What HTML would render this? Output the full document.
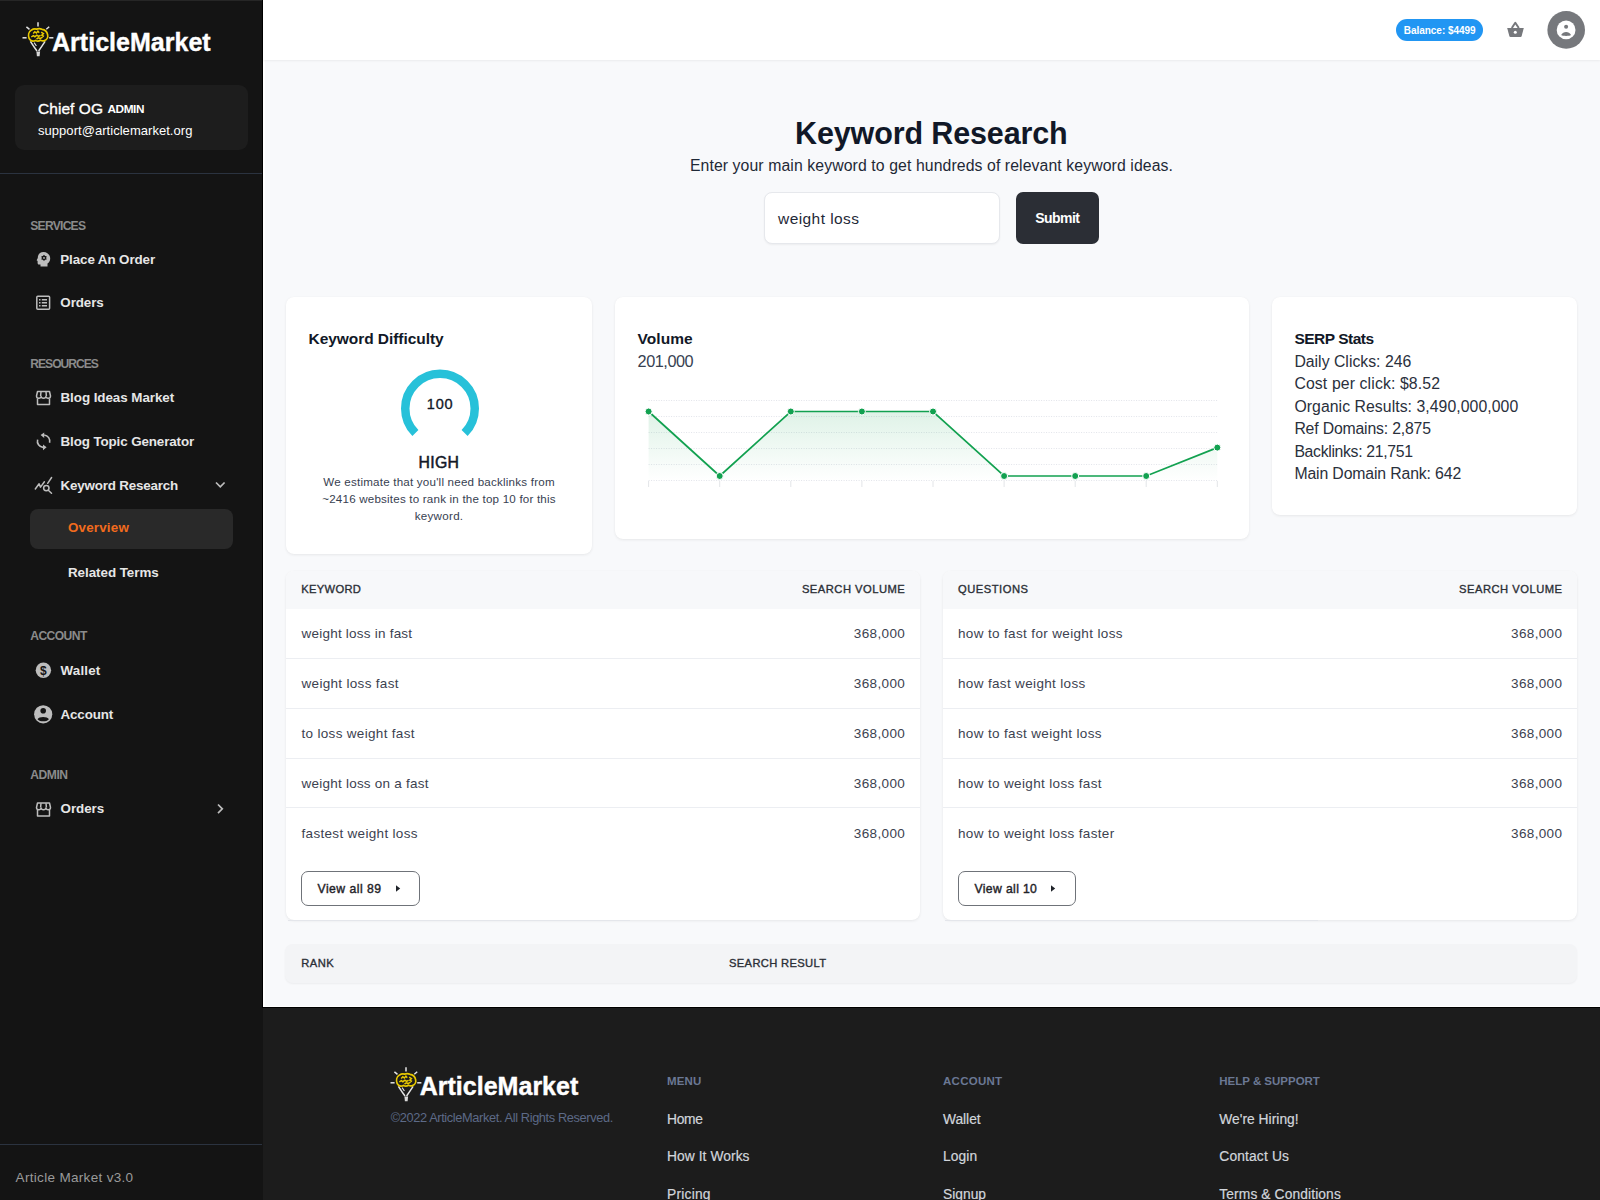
<!DOCTYPE html>
<html><head><meta charset="utf-8">
<style>
html,body{margin:0;padding:0;}
body{width:1600px;height:1200px;overflow:hidden;position:relative;background:#f8f9fb;font-family:"Liberation Sans",sans-serif;}
.t{position:absolute;white-space:nowrap;}
.a{position:absolute;}
#sb{position:absolute;left:0;top:0;width:263px;height:1200px;background:#141414;}
#sbtop{position:absolute;left:0;top:0;width:262px;height:1px;background:#262626;}
#sbline{position:absolute;left:0;top:173px;width:262px;height:1px;background:#2b3340;}
#sbline2{position:absolute;left:0;top:1144px;width:262px;height:1px;background:#2b3340;}
#ucard{position:absolute;left:15px;top:85px;width:233px;height:65px;background:#1d1d1d;border-radius:9px;}
#ov{position:absolute;left:30px;top:509px;width:203px;height:40px;background:#292929;border-radius:8px;}
#vborder{position:absolute;left:262px;top:0;width:1px;height:1008px;background:#000;}
#hborder{position:absolute;left:262px;top:1007px;width:1338px;height:1px;background:#000;}
#wbot{position:absolute;left:263px;top:1006px;width:1337px;height:1px;background:#fff;}
#footer{position:absolute;left:263px;top:1008px;width:1337px;height:192px;background:#1c1c1c;}
#sbfoot{position:absolute;left:0;top:1007px;width:262px;height:193px;background:#141414;}
#wstrip{position:absolute;left:263px;top:0;width:2px;height:1006px;background:#fff;}
#header{position:absolute;left:263px;top:0;width:1337px;height:60px;background:#fff;box-shadow:0 1px 2px rgba(0,0,0,0.06);}
#pill{position:absolute;left:1396px;top:19px;width:87px;height:22px;background:#2196f3;border-radius:11px;}
.card{position:absolute;background:#fff;border-radius:8px;box-shadow:0 1px 3px rgba(0,0,0,0.07),0 0 1px rgba(0,0,0,0.04);}
#inp{position:absolute;left:764px;top:192px;width:234px;height:50px;background:#fff;border:1px solid #e6e8ec;border-radius:8px;box-shadow:0 1px 2px rgba(0,0,0,0.05);}
#sub{position:absolute;left:1016px;top:192px;width:83px;height:52px;background:#2b2e35;border-radius:7px;}
.th{position:absolute;background:#f7f8fa;}
.sep{position:absolute;height:1px;background:#eceef2;}
.btn{position:absolute;border:1px solid #6f7379;border-radius:7px;background:#fff;}
#rank{position:absolute;left:285px;top:944px;width:1292px;height:39px;background:#f3f4f6;border-radius:8px;box-shadow:0 1px 2px rgba(0,0,0,0.05);}
</style></head><body>
<div id="sb"></div>
<div id="sbtop"></div>
<div id="ucard"></div>
<div id="sbline"></div>
<div id="ov"></div>
<div id="sbline2"></div>
<div id="footer"></div>
<div id="vborder"></div>
<div id="hborder"></div>
<div id="wbot"></div>
<div id="wstrip"></div>
<div id="header"></div>
<div id="pill"></div>

<!-- logo sidebar -->
<svg class="a" style="left:0;top:0" width="60" height="60" viewBox="0 0 60 60">
 <g stroke="#e4e4e4" stroke-width="1.5" stroke-linecap="butt" fill="none">
  <line x1="22.5" y1="37.8" x2="26.6" y2="37.8"/>
  <line x1="26.4" y1="26.8" x2="29.5" y2="29.3"/>
  <line x1="38" y1="22.2" x2="38" y2="26.4"/>
  <line x1="49.2" y1="26.8" x2="46.3" y2="29.3"/>
  <line x1="49.2" y1="37.8" x2="53.4" y2="37.8"/>
  <path d="M30.4 41.3 Q33.6 46.3 37 51"/>
  <path d="M45.1 41.3 Q41.8 46.3 38.6 51"/>
  <path d="M34.1 42.6 L36.4 46" stroke-width="1.1"/>
 </g>
 <path d="M36.4 51.5 L40.1 51.5 L39.6 56.3 L36.9 56.3 Z" fill="#d8d8d8"/>
 <path d="M29.2 38.6 C27.9 35.2 28.6 31.6 31.5 30.1 C33 28.9 35 28.7 36.5 29.1 C38 28.5 40.5 28.5 42 29.3 C44.5 29.6 47 31.6 47.6 34.6 C48.2 37.1 47 39.8 44.5 40.6 C43 41.2 41.5 40.8 40.5 40.3 C39 41.2 36.8 41.2 35.5 40.4 C34 41.2 31.5 41 30.3 40 Z" stroke="#e8c900" stroke-width="1.7" fill="#141414"/>
 <path d="M31.3 37 l2 -1.4 1.6 1.1 2 -1.6 1.6 1.3 2 -1.1 M33.2 33.4 l1.6 -1.7 1.6 1.3 1.5 -1.9 1.3 1.6 M41.2 32.2 l2.2 1.5 -1.6 1.5 2.2 1.3 M36.5 39.2 l2 -1.5 1.5 1 2.6 -1.5" stroke="#e8c900" stroke-width="1.5" fill="none"/>
</svg>
<!-- sidebar icons -->
<svg class="a" style="left:0;top:240px" width="60" height="600" viewBox="0 240 60 600">
 <g fill="#bdbdbd">
  <!-- head gear -->
  <path d="M43.5 252 C47.5 252 50.2 255 50.2 258.5 C50.2 261 49 262.5 47.5 263.5 L47.5 266.6 L40.5 266.6 L40.5 264.5 L39 264.5 C38 264.5 37.6 263.8 37.6 263 L37.6 261 L36.6 260.2 L37.8 258 C37.8 254.5 40 252 43.5 252 Z"/>
  <path d="M44.00 254.80 L45.10 255.99 L46.68 256.35 L46.20 257.90 L46.68 259.45 L45.10 259.81 L44.00 261.00 L42.90 259.81 L41.32 259.45 L41.80 257.90 L41.32 256.35 L42.90 255.99 Z" fill="#141414"/>
  <circle cx="44" cy="257.9" r="0.9" fill="#bdbdbd"/>
 </g>
 <g stroke="#bdbdbd" fill="none" stroke-width="1.5">
  <rect x="36.8" y="296.2" width="12.8" height="13" rx="1"/>
 </g>
 <g fill="#bdbdbd">
  <rect x="39" y="299" width="1.5" height="1.5"/><rect x="41.8" y="299" width="5.2" height="1.5"/>
  <rect x="39" y="302" width="1.5" height="1.5"/><rect x="41.8" y="302" width="5.2" height="1.5"/>
  <rect x="39" y="305" width="1.5" height="1.5"/><rect x="41.8" y="305" width="5.2" height="1.5"/>
 </g>
 <!-- store icon -->
 <g stroke="#bdbdbd" fill="none" stroke-width="1.5" stroke-linejoin="round">
  <path d="M36.5 396 L37.5 391.5 L49.5 391.5 L50.5 396 C50.5 397.5 49.3 398.3 48.2 398.3 C47 398.3 46 397.5 45.9 396.5 C45.8 397.5 44.8 398.3 43.5 398.3 C42.2 398.3 41.2 397.5 41.1 396.5 C41 397.5 40 398.3 38.8 398.3 C37.6 398.3 36.5 397.5 36.5 396 Z"/>
  <path d="M37.5 398.5 L37.5 404.5 L49.5 404.5 L49.5 398.5"/>
  <line x1="41" y1="391.8" x2="40.6" y2="396"/><line x1="46" y1="391.8" x2="46.4" y2="396"/>
 </g>
 <!-- refresh icon -->
 <g stroke="#bdbdbd" fill="none" stroke-width="1.6">
  <path d="M44.14 435.02 A6.2 6.2 0 0 1 49.59 442.80"/>
  <path d="M43.06 447.38 A6.2 6.2 0 0 1 37.61 439.60"/>
 </g>
 <path d="M40.6 435.1 L44.2 432.5 L44.2 438 Z M46.6 447.3 L43 450.2 L43 444.4 Z" fill="#bdbdbd"/>
 <!-- keyword research icon -->
 <g stroke="#bdbdbd" fill="none" stroke-width="1.5" stroke-linecap="round" stroke-linejoin="round">
  <path d="M35.3 489 L39.1 483.8 L40.5 487.1 L44.4 481.8"/>
  <path d="M47.7 483.3 L51.6 477.5"/>
  <circle cx="46.3" cy="488.1" r="2.7"/>
  <line x1="48.3" y1="490.2" x2="51.5" y2="493.2"/>
 </g>
 <path d="M216 482.5 L220.3 486.8 L224.6 482.5" stroke="#bdbdbd" stroke-width="1.6" fill="none" transform="translate(0,0)"/>
 <!-- wallet dollar -->
 <circle cx="43.4" cy="670.2" r="7.7" fill="#bdbdbd"/>
 <text x="43.4" y="674.6" text-anchor="middle" font-family="Liberation Sans" font-weight="bold" font-size="12" fill="#141414">$</text>
 <!-- account -->
 <circle cx="43.2" cy="714.3" r="9.1" fill="#bdbdbd"/>
 <circle cx="43.2" cy="710.8" r="2.8" fill="#141414"/>
 <path d="M37.5 719.3 C39 716.2 47.4 716.2 48.9 719.3 C47.5 721 45.5 721.3 43.2 721.3 C41 721.3 39 721 37.5 719.3 Z" fill="#141414"/>
 <!-- admin orders store -->
 <g stroke="#bdbdbd" fill="none" stroke-width="1.5" stroke-linejoin="round">
  <path d="M36.5 807.5 L37.5 803 L49.5 803 L50.5 807.5 C50.5 809 49.3 809.8 48.2 809.8 C47 809.8 46 809 45.9 808 C45.8 809 44.8 809.8 43.5 809.8 C42.2 809.8 41.2 809 41.1 808 C41 809 40 809.8 38.8 809.8 C37.6 809.8 36.5 809 36.5 807.5 Z"/>
  <path d="M37.5 810 L37.5 816 L49.5 816 L49.5 810"/>
  <line x1="41" y1="803.3" x2="40.6" y2="807.5"/><line x1="46" y1="803.3" x2="46.4" y2="807.5"/>
 </g>
</svg>
<svg class="a" style="left:200px;top:470px" width="40" height="360" viewBox="200 470 40 360">
 <path d="M216 482.5 L220.3 486.8 L224.6 482.5" stroke="#bdbdbd" stroke-width="1.7" fill="none"/>
 <path d="M218 804.5 L222.3 808.8 L218 813.1" stroke="#bdbdbd" stroke-width="1.7" fill="none"/>
</svg>

<!-- header icons -->
<svg class="a" style="left:1490px;top:0" width="110" height="60" viewBox="1490 0 110 60">
 <path d="M1507.2 27.9 L1523.8 27.9 L1521.6 36.2 Q1521.3 37 1520.5 37 L1510.5 37 Q1509.7 37 1509.4 36.2 Z" fill="#76787c"/>
 <path d="M1511.8 28 L1515.3 22.8 L1518.8 28" stroke="#76787c" stroke-width="2" fill="none" stroke-linejoin="round"/>
 <circle cx="1515.3" cy="32.3" r="1.5" fill="#fff"/>
 <circle cx="1566.2" cy="29.9" r="18.8" fill="#76787c"/>
 <circle cx="1566.1" cy="29.9" r="9.4" fill="#fff"/>
 <circle cx="1566.1" cy="26.7" r="2" fill="#76787c"/>
 <path d="M1561.2 35 C1563 31 1569.2 31 1571 35 C1569.5 36.2 1562.7 36.2 1561.2 35 Z" fill="#76787c"/>
</svg>

<div id="inp"></div>
<div id="sub"></div>

<!-- cards -->
<div class="card" style="left:286px;top:297px;width:306px;height:257px;"></div>
<div class="card" style="left:615px;top:297px;width:634px;height:242px;"></div>
<div class="card" style="left:1272px;top:297px;width:305px;height:218px;"></div>

<svg class="a" style="left:380px;top:350px" width="120" height="100" viewBox="380 350 120 100">
 <path d="M415.4 433.1 A34.75 34.75 0 1 1 464.6 433.1" stroke="#27c1d9" stroke-width="8.5" fill="none"/>
</svg>

<svg class="a" style="left:615px;top:380px" width="634" height="120" viewBox="615 380 634 120">
 <defs>
  <linearGradient id="gf" x1="0" y1="0" x2="0" y2="1">
   <stop offset="0" stop-color="#1aa355" stop-opacity="0.14"/>
   <stop offset="1" stop-color="#1aa355" stop-opacity="0"/>
  </linearGradient>
 </defs>
 <g stroke="#e2e4ea" stroke-width="1" stroke-dasharray="1 1.5">
  <line x1="648.6" y1="400.5" x2="1217.3" y2="400.5"/>
  <line x1="648.6" y1="416.5" x2="1217.3" y2="416.5"/>
  <line x1="648.6" y1="432.5" x2="1217.3" y2="432.5"/>
  <line x1="648.6" y1="448.5" x2="1217.3" y2="448.5"/>
  <line x1="648.6" y1="464.5" x2="1217.3" y2="464.5"/>
  <line x1="648.6" y1="480.5" x2="1217.3" y2="480.5"/>
 </g>
 <g stroke="#e3e5e8" stroke-width="1">
  <line x1="648.6" y1="481" x2="648.6" y2="487"/>
  <line x1="719.7" y1="481" x2="719.7" y2="487"/>
  <line x1="790.8" y1="481" x2="790.8" y2="487"/>
  <line x1="861.9" y1="481" x2="861.9" y2="487"/>
  <line x1="933" y1="481" x2="933" y2="487"/>
  <line x1="1004.1" y1="481" x2="1004.1" y2="487"/>
  <line x1="1075.2" y1="481" x2="1075.2" y2="487"/>
  <line x1="1146.2" y1="481" x2="1146.2" y2="487"/>
  <line x1="1217.3" y1="481" x2="1217.3" y2="487"/>
 </g>
 <path d="M648.6 411.5 L719.7 476 L790.8 411.5 L861.9 411.5 L933 411.5 L1004.1 476 L1075.2 476 L1146.2 476 L1217.3 447.6 L1217.3 481 L648.6 481 Z" fill="url(#gf)"/>
 <path d="M648.6 411.5 L719.7 476 L790.8 411.5 L861.9 411.5 L933 411.5 L1004.1 476 L1075.2 476 L1146.2 476 L1217.3 447.6" stroke="#12a150" stroke-width="1.7" fill="none"/>
 <g fill="#12a150" stroke="#fff" stroke-width="1">
  <circle cx="648.6" cy="411.5" r="3.5"/><circle cx="719.7" cy="476" r="3.5"/><circle cx="790.8" cy="411.5" r="3.5"/>
  <circle cx="861.9" cy="411.5" r="3.5"/><circle cx="933" cy="411.5" r="3.5"/><circle cx="1004.1" cy="476" r="3.5"/>
  <circle cx="1075.2" cy="476" r="3.5"/><circle cx="1146.2" cy="476" r="3.5"/><circle cx="1217.3" cy="447.6" r="3.5"/>
 </g>
</svg>

<!-- tables -->
<div class="card" style="left:286px;top:571px;width:634px;height:349px;"></div>
<div class="th" style="left:286px;top:571px;width:634px;height:38px;border-radius:8px 8px 0 0;"></div>
<div class="sep" style="left:286px;top:658px;width:634px;"></div>
<div class="sep" style="left:286px;top:708px;width:634px;"></div>
<div class="sep" style="left:286px;top:758px;width:634px;"></div>
<div class="sep" style="left:286px;top:807px;width:634px;"></div>
<div class="btn" style="left:301px;top:871px;width:117px;height:33px;"></div>
<svg class="a" style="left:390px;top:880px" width="15" height="15" viewBox="390 880 15 15"><path d="M396 885.3 L400.2 888.5 L396 891.7 Z" fill="#1f2329"/></svg>

<div class="card" style="left:943px;top:571px;width:634px;height:349px;"></div>
<div class="th" style="left:943px;top:571px;width:634px;height:38px;border-radius:8px 8px 0 0;"></div>
<div class="sep" style="left:943px;top:658px;width:634px;"></div>
<div class="sep" style="left:943px;top:708px;width:634px;"></div>
<div class="sep" style="left:943px;top:758px;width:634px;"></div>
<div class="sep" style="left:943px;top:807px;width:634px;"></div>
<div class="btn" style="left:958px;top:871px;width:116px;height:33px;"></div>
<svg class="a" style="left:1045px;top:880px" width="15" height="15" viewBox="1045 880 15 15"><path d="M1051 885.3 L1055.2 888.5 L1051 891.7 Z" fill="#1f2329"/></svg>

<div class="a" style="left:288px;top:920px;width:342px;height:1px;background:#e4e6eb;"></div>
<div class="a" style="left:945px;top:920px;width:373px;height:1px;background:#e4e6eb;"></div>
<div id="rank"></div>

<!-- footer logo -->
<svg class="a" style="left:368px;top:1045px" width="60" height="60" viewBox="0 0 60 60">
 <g stroke="#e4e4e4" stroke-width="1.5" stroke-linecap="butt" fill="none">
  <line x1="22.5" y1="37.8" x2="26.6" y2="37.8"/>
  <line x1="26.4" y1="26.8" x2="29.5" y2="29.3"/>
  <line x1="38" y1="22.2" x2="38" y2="26.4"/>
  <line x1="49.2" y1="26.8" x2="46.3" y2="29.3"/>
  <line x1="49.2" y1="37.8" x2="53.4" y2="37.8"/>
  <path d="M30.4 41.3 Q33.6 46.3 37 51"/>
  <path d="M45.1 41.3 Q41.8 46.3 38.6 51"/>
  <path d="M34.1 42.6 L36.4 46" stroke-width="1.1"/>
 </g>
 <path d="M36.4 51.5 L40.1 51.5 L39.6 56.3 L36.9 56.3 Z" fill="#d8d8d8"/>
 <path d="M29.2 38.6 C27.9 35.2 28.6 31.6 31.5 30.1 C33 28.9 35 28.7 36.5 29.1 C38 28.5 40.5 28.5 42 29.3 C44.5 29.6 47 31.6 47.6 34.6 C48.2 37.1 47 39.8 44.5 40.6 C43 41.2 41.5 40.8 40.5 40.3 C39 41.2 36.8 41.2 35.5 40.4 C34 41.2 31.5 41 30.3 40 Z" stroke="#e8c900" stroke-width="1.7" fill="#1c1c1c"/>
 <path d="M31.3 37 l2 -1.4 1.6 1.1 2 -1.6 1.6 1.3 2 -1.1 M33.2 33.4 l1.6 -1.7 1.6 1.3 1.5 -1.9 1.3 1.6 M41.2 32.2 l2.2 1.5 -1.6 1.5 2.2 1.3 M36.5 39.2 l2 -1.5 1.5 1 2.6 -1.5" stroke="#e8c900" stroke-width="1.5" fill="none"/>
</svg>

<div class="t" style="left:52.00px;top:30.14px;font-size:25px;line-height:25px;font-weight:700;color:#ffffff;letter-spacing:0.025px;-webkit-text-stroke:0.4px #fff;">ArticleMarket</div>
<div class="t" style="left:38.00px;top:101.48px;font-size:15.5px;line-height:15.5px;font-weight:400;color:#ffffff;letter-spacing:0.057px;-webkit-text-stroke:0.35px #fff;">Chief OG</div>
<div class="t" style="left:107.50px;top:104.01px;font-size:11.8px;line-height:11.8px;font-weight:700;color:#ffffff;letter-spacing:-0.416px;">ADMIN</div>
<div class="t" style="left:38.00px;top:124.00px;font-size:13px;line-height:13px;font-weight:400;color:#ffffff;letter-spacing:0.043px;">support@articlemarket.org</div>
<div class="t" style="left:30.30px;top:219.76px;font-size:12.1px;line-height:12.1px;font-weight:700;color:#8b8b8b;letter-spacing:-0.749px;">SERVICES</div>
<div class="t" style="left:60.30px;top:252.66px;font-size:13.4px;line-height:13.4px;font-weight:700;color:#e6e6e6;letter-spacing:-0.111px;">Place An Order</div>
<div class="t" style="left:60.30px;top:295.96px;font-size:13.4px;line-height:13.4px;font-weight:700;color:#e6e6e6;letter-spacing:-0.082px;">Orders</div>
<div class="t" style="left:30.30px;top:357.76px;font-size:12.1px;line-height:12.1px;font-weight:700;color:#8b8b8b;letter-spacing:-1.001px;">RESOURCES</div>
<div class="t" style="left:60.50px;top:391.46px;font-size:13.4px;line-height:13.4px;font-weight:700;color:#e6e6e6;letter-spacing:-0.056px;">Blog Ideas Market</div>
<div class="t" style="left:60.50px;top:434.66px;font-size:13.4px;line-height:13.4px;font-weight:700;color:#e6e6e6;letter-spacing:-0.116px;">Blog Topic Generator</div>
<div class="t" style="left:60.50px;top:478.66px;font-size:13.4px;line-height:13.4px;font-weight:700;color:#e6e6e6;letter-spacing:-0.185px;">Keyword Research</div>
<div class="t" style="left:68.00px;top:521.46px;font-size:13.4px;line-height:13.4px;font-weight:700;color:#f26b1d;letter-spacing:0.178px;">Overview</div>
<div class="t" style="left:68.00px;top:565.86px;font-size:13.4px;line-height:13.4px;font-weight:700;color:#e6e6e6;letter-spacing:-0.049px;">Related Terms</div>
<div class="t" style="left:30.30px;top:630.46px;font-size:12.1px;line-height:12.1px;font-weight:700;color:#8b8b8b;letter-spacing:-0.577px;">ACCOUNT</div>
<div class="t" style="left:60.60px;top:663.76px;font-size:13.4px;line-height:13.4px;font-weight:700;color:#e6e6e6;letter-spacing:0.133px;">Wallet</div>
<div class="t" style="left:60.60px;top:708.06px;font-size:13.4px;line-height:13.4px;font-weight:700;color:#e6e6e6;letter-spacing:-0.177px;">Account</div>
<div class="t" style="left:30.30px;top:768.76px;font-size:12.1px;line-height:12.1px;font-weight:700;color:#8b8b8b;letter-spacing:-0.459px;">ADMIN</div>
<div class="t" style="left:60.60px;top:802.06px;font-size:13.4px;line-height:13.4px;font-weight:700;color:#e6e6e6;letter-spacing:-0.082px;">Orders</div>
<div class="t" style="left:15.60px;top:1171.37px;font-size:13.5px;line-height:13.5px;font-weight:400;color:#9a9a9a;letter-spacing:0.318px;">Article Market v3.0</div>
<div class="t" style="left:1403.70px;top:25.93px;font-size:10px;line-height:10px;font-weight:700;color:#ffffff;letter-spacing:-0.021px;">Balance: $4499</div>
<div class="t" style="left:795.05px;top:118.18px;font-size:30.5px;line-height:30.5px;font-weight:700;color:#111827;letter-spacing:-0.128px;">Keyword Research</div>
<div class="t" style="left:689.90px;top:157.83px;font-size:15.8px;line-height:15.8px;font-weight:400;color:#1f2937;letter-spacing:0.096px;">Enter your main keyword to get hundreds of relevant keyword ideas.</div>
<div class="t" style="left:778.00px;top:210.58px;font-size:15.5px;line-height:15.5px;font-weight:400;color:#1f2937;letter-spacing:0.432px;">weight loss</div>
<div class="t" style="left:1035.20px;top:211.45px;font-size:14px;line-height:14px;font-weight:700;color:#ffffff;letter-spacing:-0.528px;">Submit</div>
<div class="t" style="left:308.60px;top:331.38px;font-size:15.5px;line-height:15.5px;font-weight:700;color:#111827;letter-spacing:-0.063px;">Keyword Difficulty</div>
<div class="t" style="left:426.70px;top:396.93px;font-size:14.5px;line-height:14.5px;font-weight:400;color:#111827;letter-spacing:0.904px;-webkit-text-stroke:0.35px #111827;">100</div>
<div class="t" style="left:418.40px;top:454.53px;font-size:15.8px;line-height:15.8px;font-weight:400;color:#111827;letter-spacing:0.369px;-webkit-text-stroke:0.5px #111827;">HIGH</div>
<div class="t" style="left:323.25px;top:476.38px;font-size:11.6px;line-height:11.6px;font-weight:400;color:#374151;letter-spacing:0.212px;">We estimate that you'll need backlinks from</div>
<div class="t" style="left:322.25px;top:492.78px;font-size:11.6px;line-height:11.6px;font-weight:400;color:#374151;letter-spacing:0.198px;">~2416 websites to rank in the top 10 for this</div>
<div class="t" style="left:414.70px;top:509.68px;font-size:11.6px;line-height:11.6px;font-weight:400;color:#374151;letter-spacing:0.287px;">keyword.</div>
<div class="t" style="left:637.60px;top:330.88px;font-size:15.5px;line-height:15.5px;font-weight:700;color:#111827;letter-spacing:0.033px;">Volume</div>
<div class="t" style="left:637.60px;top:353.40px;font-size:16.3px;line-height:16.3px;font-weight:400;color:#374151;letter-spacing:-0.475px;">201,000</div>
<div class="t" style="left:1294.40px;top:331.08px;font-size:15.5px;line-height:15.5px;font-weight:700;color:#111827;letter-spacing:-0.491px;">SERP Stats</div>
<div class="t" style="left:1294.40px;top:353.83px;font-size:15.8px;line-height:15.8px;font-weight:400;color:#2a303c;letter-spacing:0.009px;">Daily Clicks: 246</div>
<div class="t" style="left:1294.40px;top:376.33px;font-size:15.8px;line-height:15.8px;font-weight:400;color:#2a303c;letter-spacing:0.124px;">Cost per click: $8.52</div>
<div class="t" style="left:1294.40px;top:398.83px;font-size:15.8px;line-height:15.8px;font-weight:400;color:#2a303c;letter-spacing:0.056px;">Organic Results: 3,490,000,000</div>
<div class="t" style="left:1294.40px;top:421.33px;font-size:15.8px;line-height:15.8px;font-weight:400;color:#2a303c;letter-spacing:-0.177px;">Ref Domains: 2,875</div>
<div class="t" style="left:1294.40px;top:443.83px;font-size:15.8px;line-height:15.8px;font-weight:400;color:#2a303c;letter-spacing:-0.326px;">Backlinks: 21,751</div>
<div class="t" style="left:1294.40px;top:466.33px;font-size:15.8px;line-height:15.8px;font-weight:400;color:#2a303c;letter-spacing:-0.133px;">Main Domain Rank: 642</div>
<div class="t" style="left:301.30px;top:583.72px;font-size:11.2px;line-height:11.2px;font-weight:400;color:#2b2f36;letter-spacing:0.299px;-webkit-text-stroke:0.35px #2b2f36;">KEYWORD</div>
<div class="t" style="left:801.90px;top:583.72px;font-size:11.2px;line-height:11.2px;font-weight:400;color:#2b2f36;letter-spacing:0.493px;-webkit-text-stroke:0.35px #2b2f36;">SEARCH VOLUME</div>
<div class="t" style="left:301.50px;top:626.87px;font-size:13.5px;line-height:13.5px;font-weight:400;color:#3c4250;letter-spacing:0.225px;">weight loss in fast</div>
<div class="t" style="left:853.80px;top:626.87px;font-size:13.5px;line-height:13.5px;font-weight:400;color:#3c4250;letter-spacing:0.367px;">368,000</div>
<div class="t" style="left:301.50px;top:676.87px;font-size:13.5px;line-height:13.5px;font-weight:400;color:#3c4250;letter-spacing:0.314px;">weight loss fast</div>
<div class="t" style="left:853.80px;top:676.87px;font-size:13.5px;line-height:13.5px;font-weight:400;color:#3c4250;letter-spacing:0.367px;">368,000</div>
<div class="t" style="left:301.50px;top:726.87px;font-size:13.5px;line-height:13.5px;font-weight:400;color:#3c4250;letter-spacing:0.317px;">to loss weight fast</div>
<div class="t" style="left:853.80px;top:726.87px;font-size:13.5px;line-height:13.5px;font-weight:400;color:#3c4250;letter-spacing:0.367px;">368,000</div>
<div class="t" style="left:301.50px;top:776.87px;font-size:13.5px;line-height:13.5px;font-weight:400;color:#3c4250;letter-spacing:0.234px;">weight loss on a fast</div>
<div class="t" style="left:853.80px;top:776.87px;font-size:13.5px;line-height:13.5px;font-weight:400;color:#3c4250;letter-spacing:0.367px;">368,000</div>
<div class="t" style="left:301.50px;top:826.87px;font-size:13.5px;line-height:13.5px;font-weight:400;color:#3c4250;letter-spacing:0.317px;">fastest weight loss</div>
<div class="t" style="left:853.80px;top:826.87px;font-size:13.5px;line-height:13.5px;font-weight:400;color:#3c4250;letter-spacing:0.367px;">368,000</div>
<div class="t" style="left:317.50px;top:882.67px;font-size:12.2px;line-height:12.2px;font-weight:400;color:#1f2329;letter-spacing:0.478px;-webkit-text-stroke:0.4px #1f2329;">View all 89</div>
<div class="t" style="left:958.00px;top:583.72px;font-size:11.2px;line-height:11.2px;font-weight:400;color:#2b2f36;letter-spacing:0.514px;-webkit-text-stroke:0.35px #2b2f36;">QUESTIONS</div>
<div class="t" style="left:1459.10px;top:583.72px;font-size:11.2px;line-height:11.2px;font-weight:400;color:#2b2f36;letter-spacing:0.493px;-webkit-text-stroke:0.35px #2b2f36;">SEARCH VOLUME</div>
<div class="t" style="left:958.00px;top:626.87px;font-size:13.5px;line-height:13.5px;font-weight:400;color:#3c4250;letter-spacing:0.353px;">how to fast for weight loss</div>
<div class="t" style="left:1511.00px;top:626.87px;font-size:13.5px;line-height:13.5px;font-weight:400;color:#3c4250;letter-spacing:0.367px;">368,000</div>
<div class="t" style="left:958.00px;top:676.87px;font-size:13.5px;line-height:13.5px;font-weight:400;color:#3c4250;letter-spacing:0.342px;">how fast weight loss</div>
<div class="t" style="left:1511.00px;top:676.87px;font-size:13.5px;line-height:13.5px;font-weight:400;color:#3c4250;letter-spacing:0.367px;">368,000</div>
<div class="t" style="left:958.00px;top:726.87px;font-size:13.5px;line-height:13.5px;font-weight:400;color:#3c4250;letter-spacing:0.349px;">how to fast weight loss</div>
<div class="t" style="left:1511.00px;top:726.87px;font-size:13.5px;line-height:13.5px;font-weight:400;color:#3c4250;letter-spacing:0.367px;">368,000</div>
<div class="t" style="left:958.00px;top:776.87px;font-size:13.5px;line-height:13.5px;font-weight:400;color:#3c4250;letter-spacing:0.349px;">how to weight loss fast</div>
<div class="t" style="left:1511.00px;top:776.87px;font-size:13.5px;line-height:13.5px;font-weight:400;color:#3c4250;letter-spacing:0.367px;">368,000</div>
<div class="t" style="left:958.00px;top:826.87px;font-size:13.5px;line-height:13.5px;font-weight:400;color:#3c4250;letter-spacing:0.349px;">how to weight loss faster</div>
<div class="t" style="left:1511.00px;top:826.87px;font-size:13.5px;line-height:13.5px;font-weight:400;color:#3c4250;letter-spacing:0.367px;">368,000</div>
<div class="t" style="left:974.50px;top:882.67px;font-size:12.2px;line-height:12.2px;font-weight:400;color:#1f2329;letter-spacing:0.368px;-webkit-text-stroke:0.4px #1f2329;">View all 10</div>
<div class="t" style="left:301.30px;top:958.02px;font-size:11.2px;line-height:11.2px;font-weight:400;color:#2b2f36;letter-spacing:0.473px;-webkit-text-stroke:0.35px #2b2f36;">RANK</div>
<div class="t" style="left:729.00px;top:958.02px;font-size:11.2px;line-height:11.2px;font-weight:400;color:#2b2f36;letter-spacing:0.330px;-webkit-text-stroke:0.35px #2b2f36;">SEARCH RESULT</div>
<div class="t" style="left:419.70px;top:1073.94px;font-size:25px;line-height:25px;font-weight:700;color:#ffffff;letter-spacing:0.017px;-webkit-text-stroke:0.4px #fff;">ArticleMarket</div>
<div class="t" style="left:390.70px;top:1111.96px;font-size:12.8px;line-height:12.8px;font-weight:400;color:#5d6a87;letter-spacing:-0.379px;">©2022 ArticleMarket. All Rights Reserved.</div>
<div class="t" style="left:667.00px;top:1075.97px;font-size:11.5px;line-height:11.5px;font-weight:700;color:#6b7894;letter-spacing:0.180px;">MENU</div>
<div class="t" style="left:667.00px;top:1112.72px;font-size:13.8px;line-height:13.8px;font-weight:400;color:#d1d5db;letter-spacing:-0.268px;-webkit-text-stroke:0.2px #d1d5db;">Home</div>
<div class="t" style="left:667.00px;top:1150.22px;font-size:13.8px;line-height:13.8px;font-weight:400;color:#d1d5db;letter-spacing:0.066px;-webkit-text-stroke:0.2px #d1d5db;">How It Works</div>
<div class="t" style="left:667.00px;top:1187.72px;font-size:13.8px;line-height:13.8px;font-weight:400;color:#d1d5db;letter-spacing:0.221px;-webkit-text-stroke:0.2px #d1d5db;">Pricing</div>
<div class="t" style="left:943.00px;top:1075.97px;font-size:11.5px;line-height:11.5px;font-weight:700;color:#6b7894;letter-spacing:0.268px;">ACCOUNT</div>
<div class="t" style="left:943.00px;top:1112.72px;font-size:13.8px;line-height:13.8px;font-weight:400;color:#d1d5db;letter-spacing:-0.044px;-webkit-text-stroke:0.2px #d1d5db;">Wallet</div>
<div class="t" style="left:943.00px;top:1150.22px;font-size:13.8px;line-height:13.8px;font-weight:400;color:#d1d5db;letter-spacing:0.086px;-webkit-text-stroke:0.2px #d1d5db;">Login</div>
<div class="t" style="left:943.00px;top:1187.72px;font-size:13.8px;line-height:13.8px;font-weight:400;color:#d1d5db;letter-spacing:0.008px;-webkit-text-stroke:0.2px #d1d5db;">Signup</div>
<div class="t" style="left:1219.30px;top:1075.97px;font-size:11.5px;line-height:11.5px;font-weight:700;color:#6b7894;letter-spacing:-0.012px;">HELP &amp; SUPPORT</div>
<div class="t" style="left:1219.30px;top:1112.72px;font-size:13.8px;line-height:13.8px;font-weight:400;color:#d1d5db;letter-spacing:0.021px;-webkit-text-stroke:0.2px #d1d5db;">We're Hiring!</div>
<div class="t" style="left:1219.30px;top:1150.22px;font-size:13.8px;line-height:13.8px;font-weight:400;color:#d1d5db;letter-spacing:0.151px;-webkit-text-stroke:0.2px #d1d5db;">Contact Us</div>
<div class="t" style="left:1219.30px;top:1187.72px;font-size:13.8px;line-height:13.8px;font-weight:400;color:#d1d5db;letter-spacing:0.111px;-webkit-text-stroke:0.2px #d1d5db;">Terms &amp; Conditions</div>
</body></html>
